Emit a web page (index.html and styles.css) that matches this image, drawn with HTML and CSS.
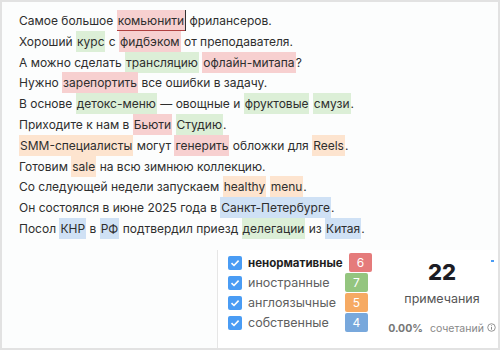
FILE: index.html
```html
<!DOCTYPE html>
<html lang="ru">
<head>
    <meta charset="UTF-8">
    <title>Проверка текста</title>
    <link rel="stylesheet" href="styles.css">
</head>
<body>
    <div class="frame">
        <!-- текст с подсветкой -->
        <div class="text">
            <p>Самое большое <span class="hl bad active">комьюнити</span> фрилансеров.</p>
            <p>Хороший <span class="hl foreign">курс</span> с <span class="hl bad">фидбэком</span> от преподавателя.</p>
            <p>А можно сделать <span class="hl foreign">трансляцию</span> <span class="hl bad">офлайн-митапа</span>?</p>
            <p>Нужно <span class="hl bad">зарепортить</span> все ошибки в задачу.</p>
            <p>В основе <span class="hl foreign">детокс-меню</span> — овощные и <span class="hl foreign">фруктовые</span> <span class="hl foreign">смузи</span>.</p>
            <p>Приходите к нам в <span class="hl bad">Бьюти</span> <span class="hl foreign">Студию</span>.</p>
            <p><span class="hl eng">SMM-специалисты</span> могут <span class="hl bad">генерить</span> обложки для <span class="hl eng">Reels</span>.</p>
            <p>Готовим <span class="hl eng">sale</span> на всю зимнюю коллекцию.</p>
            <p>Со следующей недели запускаем <span class="hl eng">healthy</span> <span class="hl eng">menu</span>.</p>
            <p>Он состоялся в июне 2025 года в <span class="hl proper">Санкт-Петербурге</span>.</p>
            <p>Посол <span class="hl proper">КНР</span> в <span class="hl proper">РФ</span> подтвердил приезд <span class="hl foreign">делегации</span> из <span class="hl proper">Китая</span>.</p>
        </div>

        <!-- панель с категориями -->
        <div class="panel">
            <div class="filters">
                <div class="row first">
                    <span class="check"><svg width="10" height="10" viewBox="0 0 10 10"><path d="M1.5 5.2 L4 7.5 L8.6 2.6" fill="none" stroke="#fff" stroke-width="1.6"/></svg></span>
                    <span class="label strong">ненормативные</span>
                    <span class="badge red">6</span>
                </div>
                <div class="row">
                    <span class="check"><svg width="10" height="10" viewBox="0 0 10 10"><path d="M1.5 5.2 L4 7.5 L8.6 2.6" fill="none" stroke="#fff" stroke-width="1.6"/></svg></span>
                    <span class="label">иностранные</span>
                    <span class="badge green">7</span>
                </div>
                <div class="row">
                    <span class="check"><svg width="10" height="10" viewBox="0 0 10 10"><path d="M1.5 5.2 L4 7.5 L8.6 2.6" fill="none" stroke="#fff" stroke-width="1.6"/></svg></span>
                    <span class="label">англоязычные</span>
                    <span class="badge orange">5</span>
                </div>
                <div class="row">
                    <span class="check"><svg width="10" height="10" viewBox="0 0 10 10"><path d="M1.5 5.2 L4 7.5 L8.6 2.6" fill="none" stroke="#fff" stroke-width="1.6"/></svg></span>
                    <span class="label">собственные</span>
                    <span class="badge blue">4</span>
                </div>
            </div>
            <div class="stats">
                <div class="count">22</div>
                <div class="caption">примечания</div>
                <div class="combo">
                    <b>0.00%</b> сочетаний
                    <svg width="9" height="9" viewBox="0 0 10 10"><circle cx="5" cy="5" r="4.2" fill="none" stroke="#888" stroke-width="1"/><path d="M5 4.3 V7.4 M5 2.6 V3.4" stroke="#888" stroke-width="1.1"/></svg>
                </div>
                <span class="scroll"></span>
            </div>
        </div>
    </div>
</body>
</html>
```

FILE: styles.css
```css
/* общий вид */
body {
    margin: 0;
    font-family: Inter, "Noto Sans", sans-serif;
    color: #2e2e2e;
}

.frame {
    width: 500px;
    height: 350px;
    box-sizing: border-box;
    border: 2px solid #e2e2e2;
    background-color: #fcfdfd;
    display: flex;
    flex-direction: column;
}

.text {
    padding: 9px 0 0 17px;
    font-size: 12px;
}

.text p {
    margin: 0;
    line-height: 20.8px;
}

.hl {
    padding: 3px 1px;
}

.bad { background-color: #f7d0d0; }
.foreign { background-color: #dcefd7; }
.eng { background-color: #fde4cf; }
.proper { background-color: #cfe1f5; }

.active {
    box-shadow: inset 0 -1px 0 #b04040;
    border-right: 1px solid #333;
}

/* панель */
.panel {
    margin: 10px 0 0 215px;
    flex: 1;
    display: flex;
    border-left: 1px solid #e6e6e6;
    background-color: #fff;
}

.filters {
    padding: 3px 0 0 10px;
    width: 158px;
}

.row {
    display: flex;
    align-items: center;
    height: 20px;
}

.check {
    width: 14px;
    height: 14px;
    border-radius: 2px;
    background-color: #4a9cf4;
    display: flex;
    align-items: center;
    justify-content: center;
}

.label {
    margin-left: 6px;
    width: 97px;
    font-size: 12.5px;
    color: #606060;
}

.strong {
    font-size: 11.5px;
    font-weight: bold;
    color: #1e1e1e;
    width: 101px;
}

.badge {
    width: 23px;
    height: 19px;
    border-radius: 2px;
    color: #fff;
    font-size: 12px;
    display: flex;
    align-items: center;
    justify-content: center;
}

.red { background-color: #e57b7b; }
.green { background-color: #94c57f; }
.orange { background-color: #f6aa63; }
.blue { background-color: #78a8dc; }

.stats {
    flex: 1;
    position: relative;
    text-align: center;
    padding-top: 9px;
}

.count {
    font-size: 22px;
    font-weight: 800;
    color: #1d1d24;
}

.caption {
    font-size: 12.5px;
    color: #555;
    margin-top: 6px;
}

.combo {
    font-size: 10.5px;
    color: #888;
    margin-top: 16px;
    white-space: nowrap;
}

.combo b {
    color: #777;
    margin-right: 4px;
}

.scroll {
    position: absolute;
    right: 6px;
    top: 10px;
    width: 1px;
    height: 6px;
    border-top: 2px dotted #4a9cf4;
}
```
